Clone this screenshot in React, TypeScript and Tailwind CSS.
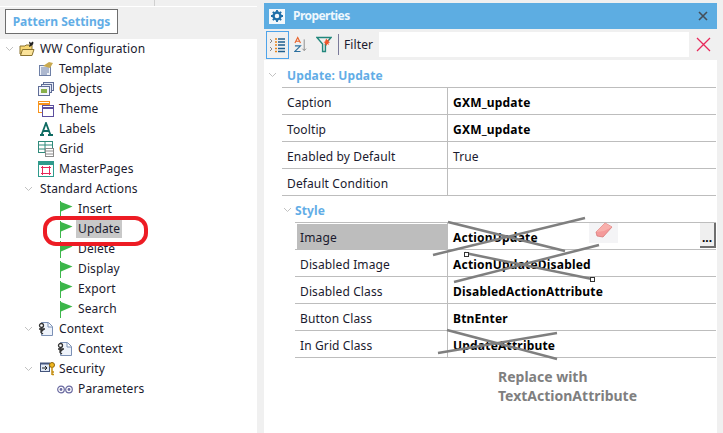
import React from "react";

const Chevron = () => (
  <svg width="9" height="6" viewBox="0 0 9 6" className="shrink-0">
    <path d="M1 1l3.5 3.5L8 1" fill="none" stroke="#c2c2c2" strokeWidth="1" />
  </svg>
);

const Flag = () => (
  <svg width="13" height="17" viewBox="0 0 13 17" className="ml-[3px] shrink-0">
    <path d="M0.500 0v17" stroke="#3cb64a" strokeWidth="1" />
    <path d="M1 1L12.500 5.500L1 10.500z" fill="#3cb64a" />
  </svg>
);

const Folder = () => (
  <svg width="16" height="16" viewBox="0 0 16 16" className="shrink-0">
    <path d="M1 5h5l1-1h6v9H1z" fill="#f7d774" stroke="#8a7330" strokeWidth="1" />
    <path d="M1.500 14.500l2-6h11.500l-2 6z" fill="#fbe39a" stroke="#8a7330" strokeWidth="1" />
    <path d="M10.500 0.500l1.500 1.500 1.500-1.500 1 1-.5 2-2 1.500-1.500 1-.5-1 1-1.500-1-1.500z" fill="#222" />
  </svg>
);

const TemplateIcon = () => (
  <svg width="16" height="16" viewBox="0 0 16 16" className="shrink-0">
    <rect x="1.500" y="4.500" width="11" height="10" fill="#eef2f8" stroke="#6d7fa6" />
    <path d="M3 7h8M3 9h8M3 11h8M3 13h6" stroke="#6d7fa6" />
    <path d="M5 5l6-4 4 1-3 5z" fill="#c9a94f" />
  </svg>
);

const ObjectsIcon = () => (
  <svg width="16" height="16" viewBox="0 0 16 16" className="shrink-0">
    <rect x="5.500" y="1.500" width="10" height="8" fill="#e5eaf5" stroke="#5f6d97" />
    <rect x="3.500" y="3.500" width="10" height="8" fill="#e5eaf5" stroke="#5f6d97" />
    <rect x="0.500" y="5.500" width="11" height="9" fill="#f3f5fb" stroke="#5f6d97" />
    <rect x="3" y="8" width="6" height="4" fill="#88b04b" />
  </svg>
);

const ThemeIcon = () => (
  <svg width="16" height="16" viewBox="0 0 16 16" className="shrink-0">
    <rect x="0.500" y="0.500" width="11" height="11" fill="#fff" stroke="#f7941d" />
    <path d="M1 3h10" stroke="#f7941d" strokeWidth="2" />
    <rect x="4.500" y="4.500" width="11" height="11" fill="#fff" stroke="#5c4f9f" />
    <path d="M5 7h10" stroke="#5c4f9f" strokeWidth="2" />
  </svg>
);

const LabelsIcon = () => (
  <svg width="16" height="14" viewBox="0 0 16 14" className="shrink-0">
    <path d="M2 13h4M10 13h5M3.500 13L8 1l4.500 12M5.500 9h5" fill="none" stroke="#0f6b62" strokeWidth="1.800" />
  </svg>
);

const GridIcon = () => (
  <svg width="16" height="16" viewBox="0 0 16 16" className="shrink-0">
    <rect x="0.500" y="0.500" width="14" height="11" fill="#fff" stroke="#2f8a7b" />
    <path d="M1 4h13M1 8h13M7 1v10" stroke="#2f8a7b" />
    <rect x="7.500" y="7.500" width="8" height="8" fill="#fff" stroke="#8b8b8b" />
    <path d="M8 10h7M8 13h7" stroke="#8b8b8b" />
  </svg>
);

const MasterIcon = () => (
  <svg width="16" height="16" viewBox="0 0 16 16" className="shrink-0">
    <rect x="0.500" y="0.500" width="15" height="15" fill="#fff" stroke="#2f9a8c" />
    <path d="M1 2.500h14" stroke="#2f9a8c" strokeWidth="3" />
    <path d="M3 6.500h10M3 12.500h10M4.500 5v9M11.500 5v9" stroke="#e8285a" />
  </svg>
);

const ContextIcon = () => (
  <svg width="15" height="14" viewBox="0 0 15 14" className="shrink-0">
    <path d="M3.500 0.500h7l4 4v9h-11z" fill="#eef3fb" stroke="#7b90b5" />
    <path d="M10 1v4h4" fill="#fff" stroke="#7b90b5" />
    <circle cx="3.500" cy="3.500" r="2" fill="#fff" stroke="#333" strokeWidth="1.300" />
    <path d="M1 7h6M3 5.500v5l2 1.500M6.500 6.500l-3 3" fill="none" stroke="#333" strokeWidth="1.300" />
  </svg>
);

const SecurityIcon = () => (
  <svg width="15" height="14" viewBox="0 0 15 14" className="ml-[2px] shrink-0">
    <rect x="0.500" y="1.500" width="9" height="8" fill="#dfe8f5" stroke="#44557c" />
    <path d="M0 1.500h10" stroke="#44557c" strokeWidth="2" />
    <path d="M2 6h5M5 4l2 2-2 2" fill="none" stroke="#222" />
    <circle cx="12" cy="3" r="2.500" fill="#f2b81f" stroke="#8a6410" />
    <path d="M12 5v8M12 10h2M12 12.500h2" stroke="#c48f12" strokeWidth="1.500" />
  </svg>
);

const ParamsIcon = () => (
  <svg width="16" height="9" viewBox="0 0 16 9" className="shrink-0">
    <circle cx="4" cy="4.500" r="3.300" fill="none" stroke="#6a6aa0" strokeWidth="1.200" />
    <circle cx="4" cy="4.500" r="1.400" fill="#6a6aa0" />
    <circle cx="12" cy="4.500" r="3.300" fill="none" stroke="#6a6aa0" strokeWidth="1.200" />
    <circle cx="12" cy="4.500" r="1.400" fill="#6a6aa0" />
  </svg>
);

function TreeRow({
  indent,
  chevron,
  icon,
  label,
  selected,
}: {
  indent: number;
  chevron?: boolean;
  icon?: React.ReactNode;
  label: string;
  selected?: boolean;
}) {
  return (
    <div className="flex h-5 items-center" style={{ paddingLeft: indent }}>
      <div className="flex w-[14px] shrink-0 items-center">{chevron ? <Chevron /> : null}</div>
      <div className="flex w-[21px] shrink-0 items-center">{icon}</div>
      <span className={selected ? "-ml-[2px] bg-[#c8c8c8] px-[2px] leading-[18px]" : "leading-[18px]"}>{label}</span>
    </div>
  );
}

function PropRow({
  label,
  value,
  bold = true,
  highlight,
  extra,
  inner,
}: {
  label: string;
  value?: string;
  bold?: boolean;
  highlight?: boolean;
  extra?: React.ReactNode;
  inner?: boolean;
}) {
  return (
    <div className={`flex h-[27px] border-b border-[#bdbdbd] ${inner ? "ml-[31px]" : "ml-[18px]"}`}>
      <div
        className={`flex border-r border-[#bdbdbd] ${inner ? "w-[153px] pl-[2px]" : "w-[166px]"} ${
          highlight ? "pt-px" : ""
        }`}
      >
        <div
          className={`flex flex-1 items-center ${highlight ? "pt-[3px]" : "pt-[4px]"} ${inner ? "pl-[3px]" : "pl-[5px]"} ${
            highlight ? "bg-[#bdbdbd]" : ""
          }`}
        >
          {label}
        </div>
      </div>
      <div
        className={`flex flex-1 items-center justify-between pl-[5px] ${
          bold ? "font-bold tracking-[0.2px] text-black" : ""
        }`}
      >
        <span className="pt-[4px]">{value}</span>
        {extra}
      </div>
    </div>
  );
}

export default function App() {
  return (
    <div
      className="relative flex h-[433px] w-[723px] overflow-hidden bg-[#f0f0f0] text-[12px] tracking-[0.12px] text-[#1a1a2e]"
      style={{ fontFamily: '"Noto Sans", "Open Sans", sans-serif' }}
    >
      {/* Left panel */}
      <div className="flex w-[257px] shrink-0 flex-col">
        <div className="h-[7px] border-b border-white">
          <div className="ml-[154px] h-[6px] w-px bg-[#d0d0d0]" />
        </div>
        <div className="flex h-[32px] items-start pl-[5px] pt-[2px]">
          <div className="flex h-[25px] w-[113px] items-center justify-center border border-[#6e6e6e] bg-white font-bold tracking-normal text-[#62ade6]">
            Pattern Settings
          </div>
        </div>
        <div className="flex-1 bg-white">
          <TreeRow indent={5} chevron icon={<Folder />} label="WW Configuration" />
          <TreeRow indent={24} icon={<TemplateIcon />} label="Template" />
          <TreeRow indent={24} icon={<ObjectsIcon />} label="Objects" />
          <TreeRow indent={24} icon={<ThemeIcon />} label="Theme" />
          <TreeRow indent={24} icon={<LabelsIcon />} label="Labels" />
          <TreeRow indent={24} icon={<GridIcon />} label="Grid" />
          <TreeRow indent={24} icon={<MasterIcon />} label="MasterPages" />
          <div className="flex h-5 items-center pl-[24px]">
            <div className="w-[16px]">
              <Chevron />
            </div>
            <span>Standard Actions</span>
          </div>
          <TreeRow indent={43} icon={<Flag />} label="Insert" />
          <TreeRow indent={43} icon={<Flag />} label="Update" selected />
          <TreeRow indent={43} icon={<Flag />} label="Delete" />
          <TreeRow indent={43} icon={<Flag />} label="Display" />
          <TreeRow indent={43} icon={<Flag />} label="Export" />
          <TreeRow indent={43} icon={<Flag />} label="Search" />
          <TreeRow indent={24} chevron icon={<ContextIcon />} label="Context" />
          <TreeRow indent={43} icon={<ContextIcon />} label="Context" />
          <TreeRow indent={24} chevron icon={<SecurityIcon />} label="Security" />
          <TreeRow indent={43} icon={<ParamsIcon />} label="Parameters" />
        </div>
      </div>

      {/* Right panel */}
      <div className="ml-[7px] flex w-[453px] shrink-0 flex-col pt-[3px]">
        <div className="flex h-[26px] items-center justify-between bg-[#5dade2] pl-[5px] pr-[9px]">
          <div className="flex items-center gap-[8px]">
            <div className="flex h-[15px] w-[16px] items-center justify-center bg-[#f4f8fb]">
              <svg width="12" height="12" viewBox="0 0 12 12">
                <circle cx="6" cy="6" r="3.500" fill="none" stroke="#1f6fa8" strokeWidth="2.500" />
                <path
                  d="M6 0v2M6 10v2M0 6h2M10 6h2M1.800 1.800l1.400 1.400M8.800 8.800l1.400 1.400M1.800 10.200l1.400-1.400M8.800 3.200l1.400-1.400"
                  stroke="#1f6fa8"
                  strokeWidth="1.800"
                />
              </svg>
            </div>
            <span className="font-bold tracking-[-0.55px] text-[#eef7fd]">Properties</span>
          </div>
          <svg width="10" height="10" viewBox="0 0 10 10">
            <path d="M1 1l8 8M9 1l-8 8" stroke="#454f59" strokeWidth="1.600" />
          </svg>
        </div>

        <div className="flex h-[31px] items-center pl-[2px]">
          <div className="flex h-[28px] w-[23px] shrink-0 items-center justify-center border border-[#4da3ea]">
            <svg width="17" height="16" viewBox="0 0 17 16">
              <path d="M1 2l2 2-2 2M1 10l2 2-2 2" fill="none" stroke="#888" />
              <path d="M6 2h2M6 5h2M6 8h2M6 11.500h2M6 14.500h2" stroke="#e8841a" strokeWidth="1.300" />
              <path d="M9 2h7M9 5h7M9 8h7M9 11.500h7M9 14.500h7" stroke="#1f5f8f" strokeWidth="1.300" />
            </svg>
          </div>
          <svg width="13" height="17" viewBox="0 0 14 17" className="ml-[5px] shrink-0">
            <path d="M1 7l3-6 3 6M2 5h4" fill="none" stroke="#e8622a" strokeWidth="1.200" />
            <path d="M1 10h6l-6 6h6" fill="none" stroke="#2b6f9e" strokeWidth="1.200" />
            <path d="M11 3v12M9 13l2 2 2-2" fill="none" stroke="#888" />
          </svg>
          <svg width="16" height="17" viewBox="0 0 17 17" className="ml-[9px] shrink-0">
            <path d="M1 1h15L10 8v8H7V8z" fill="none" stroke="#22877c" strokeWidth="1.500" />
            <path d="M10 4l1-2 1 2 2-1-1 2 2 1-2 1 1 2-2-1-1 2-1-2-1 1 1-2-2-1 2-1z" fill="#f0562a" />
          </svg>
          <div className="ml-[6px] h-[21px] w-px shrink-0 bg-[#7a7a9a]" />
          <span className="ml-[5px] w-[35px] shrink-0">Filter</span>
          <div className="h-[25px] w-[310px] shrink-0 bg-white" />
          <svg width="15" height="15" viewBox="0 0 15 15" className="ml-[7px] shrink-0">
            <path d="M1 1l13 13M14 1L1 14" stroke="#e8285a" strokeWidth="1.300" />
          </svg>
        </div>

        <div className="flex-1 bg-white pr-[1px]">
          <div className="relative ml-[18px] flex h-[28px] items-center border-b border-[#bdbdbd] pt-[4px]">
            <div className="absolute -left-[14px] top-[12px]">
              <Chevron />
            </div>
            <span className="ml-[5px] font-bold text-[#62ade6]">Update: Update</span>
          </div>
          <PropRow label="Caption" value="GXM_update" />
          <PropRow label="Tooltip" value="GXM_update" />
          <PropRow label="Enabled by Default" value="True" bold={false} />
          <PropRow label="Default Condition" value="" bold={false} />
          <div className="relative ml-[31px] flex h-[27px] items-center border-b border-[#bdbdbd] pt-[4px]">
            <div className="absolute -left-[12px] top-[11px]">
              <Chevron />
            </div>
            <span className="font-bold text-[#62ade6]">Style</span>
          </div>
          <PropRow
            inner
            highlight
            label="Image"
            value="ActionUpdate"
            extra={
              <div className="flex h-[25px] w-[16px] items-end justify-center self-start border-b-2 border-r-2 border-[#6e6e6e] bg-[#efefef] pb-[2px] font-bold leading-none tracking-normal">
                ...
              </div>
            }
          />
          <PropRow inner label="Disabled Image" value="ActionUpdateDisabled" />
          <PropRow inner label="Disabled Class" value="DisabledActionAttribute" />
          <PropRow inner label="Button Class" value="BtnEnter" />
          <PropRow inner label="In Grid Class" value="UpdateAttribute" />
          <div className="ml-[234px] mt-[9px] text-[14px] font-bold leading-[19px] tracking-normal text-[#7f7f7f]">
            <div>Replace with</div>
            <div>TextActionAttribute</div>
          </div>
        </div>
      </div>
      <div className="flex-1" />

      {/* Annotations */}
      <svg width="723" height="433" viewBox="0 0 723 433" className="pointer-events-none absolute left-0 top-0">
        <rect x="45" y="218" width="101" height="26" rx="11" fill="none" stroke="#ed1c24" strokeWidth="4" />
        <g stroke="#7f7f7f" strokeWidth="2.500" fill="none">
          <path d="M448 222L565 251" />
          <path d="M433 255L585 218" />
          <path d="M465 253L592 279" />
          <path d="M454 282L599 245" />
          <path d="M447 330L557 359" />
          <path d="M438 353L557 333" />
        </g>
        <rect x="464.500" y="252.500" width="4" height="4" fill="#fff" stroke="#333" />
        <rect x="590.500" y="277.500" width="4" height="4" fill="#fff" stroke="#333" />
        <rect x="589" y="223" width="29" height="20" fill="#f4f4f6" />
        <path d="M596 232l9-9 7 4-9 10-6-1z" fill="#f49a9a" stroke="#d87878" strokeWidth="0.800" />
        <path d="M596 232l9-9 7 4-8 4z" fill="#f8b0ac" />
      </svg>
    </div>
  );
}
